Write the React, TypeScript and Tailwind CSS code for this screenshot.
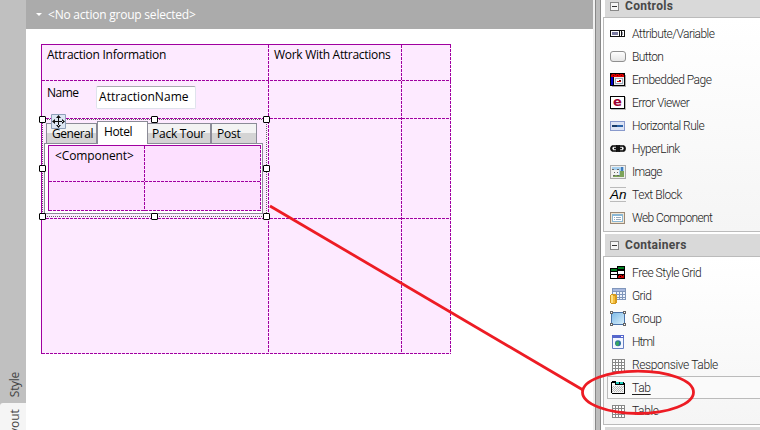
import React from "react";

const hDash = "h-px bg-[repeating-linear-gradient(90deg,#a000a0_0_3px,transparent_3px_4px)]";
const vDash = "w-px bg-[repeating-linear-gradient(180deg,#a000a0_0_3px,transparent_3px_4px)]";

const Ico = ({ children }: { children: React.ReactNode }) => (
  <svg width="16" height="16" viewBox="0 0 16 16" shapeRendering="crispEdges" className="block shrink-0">{children}</svg>
);

const AttributeIcon = () => (
  <Ico>
    <path d="M0 4h15v7H0z" fill="#111" /><path d="M1 5h8v5H1zM10 5h1v5h-1zM12 5h2v5h-2z" fill="#fff" />
    <path d="M2 6h6v3H2z" fill="#7a7aa0" /><path d="M12 6h1v3h-1z" fill="#99a" />
  </Ico>
);
const ButtonIcon = () => (
  <svg width="16" height="16" viewBox="0 0 16 16" className="block shrink-0">
    <defs><linearGradient id="btn" x1="0" y1="0" x2="0" y2="1"><stop stopColor="#fff" /><stop offset="1" stopColor="#e4e4e4" /></linearGradient></defs>
    <rect x=".5" y="2.5" width="15" height="10" rx="2.5" fill="url(#btn)" stroke="#909090" />
  </svg>
);
const EmbeddedIcon = () => (
  <Ico>
    <path d="M2 3h14v12H2z" fill="#aaa" />
    <path d="M0 1h15v13H0z" fill="#000" /><path d="M1 2h13v3H1z" fill="#d00" />
    <path d="M1 2h1v1H1zM3 3h1v1H3zM5 2h1v1H5zM7 3h1v1H7zM9 2h1v1H9zM11 3h1v1h-1zM13 2h1v1h-1z" fill="#600" />
    <path d="M1 5h2v8H1z" fill="#00c" /><path d="M4 5h10v8H4z" fill="#eee" />
    <path d="M5 6h8v6H5z" fill="#9ab" /><path d="M6 7h6v4H6z" fill="#fff" /><path d="M7 9h4v1H7z" fill="#c00" /><path d="M9 8h2v1H9z" fill="#400" />
  </Ico>
);
const ErrorIcon = () => (
  <span className="block h-[13px] w-[15px] shrink-0 border border-black bg-white text-center font-['DejaVu_Sans',sans-serif] text-[13px] font-bold leading-[9px] text-[#a00030] shadow-[1px_1px_0_#bbb]">e</span>
);
const RuleIcon = () => (
  <Ico><path d="M0 3h15v10H0z" fill="#8899cc" /><path d="M1 4h13v8H1z" fill="#dde4f4" /><path d="M2 7h11v2H2z" fill="#2a62a8" /><path d="M2 7h5v2H2z" fill="#173a66" /></Ico>
);
const LinkIcon = () => (
  <svg width="16" height="16" viewBox="0 0 16 16" className="block shrink-0" fill="none">
    <rect x="1.2" y="5" width="8" height="5" rx="2.5" stroke="#111" strokeWidth="2.2" /><rect x="6.8" y="5" width="8" height="5" rx="2.5" stroke="#111" strokeWidth="2.2" />
    <path d="M4 7.5h8" stroke="#111" strokeWidth="1.5" /><path d="M3 5h3M10 5h3M3 10h3M10 10h3" stroke="#aaa" strokeWidth=".6" />
  </svg>
);
const ImageIcon = () => (
  <Ico>
    <path d="M0 1h16v14H0z" fill="#aaa" /><path d="M1 2h14v12H1z" fill="#eee" /><path d="M2 3h12v10H2z" fill="#a5cfee" />
    <path d="M2 11h12v2H2zM10 7h4v5h-4z" fill="#7da35a" /><path d="M11 3h2v4h-2z" fill="#3e79bc" /><path d="M2 6h7v5H3v2H2z" fill="#f2f2f2" />
    <path d="M2 5h2v1H2zM7 5h2v1H7zM4 8h1v1H4zM7 8h1v1H7zM3 11h2v1H3zM7 11h2v1H7z" fill="#666" />
  </Ico>
);
const TextIcon = () => (
  <span className="block h-[15px] w-4 shrink-0 border-y border-[#bbb] font-['Liberation_Sans',sans-serif] text-[13.5px] font-medium italic leading-[13px] text-black">An</span>
);
const WebIcon = () => (
  <Ico>
    <path d="M0 2h15v12H0z" fill="#998876" /><path d="M1 3h13v10H1z" fill="#f0e6d4" /><path d="M2 4h11v8H2z" fill="#8ab7d5" />
    <path d="M3 6h9v5H3z" fill="#fff" /><path d="M4 7h1v1H4zM6 7h5v1H6zM4 9h1v1H4zM6 9h5v1H6z" fill="#9ab" />
  </Ico>
);
const FreeGridIcon = () => (
  <Ico>
    <path d="M7 1h8v13H7zM0 3h8v11H0z" fill="#000" /><path d="M8 2h6v2H8zM1 4h6v2H1z" fill="#008020" />
    <path d="M8 6h6v3H8zM1 7h6v2H1zM1 10h6v3H1z" fill="#fff" /><path d="M8 10h6v3H8z" fill="#c00" />
    <path d="M8 10h1v1H8zM10 11h1v1h-1zM12 10h1v1h-1z" fill="#000" />
  </Ico>
);
const GridIcon = () => (
  <Ico>
    <path d="M2 0h14v12H2z" fill="#8096bb" /><path d="M3 1h12v2H3z" fill="#a8b9df" />
    <path d="M3 4h3v2H3zM7 4h2v2H7zM10 4h2v2h-2zM13 4h2v2h-2zM3 7h3v2H3zM7 7h2v2H7zM10 7h2v2h-2zM13 7h2v2h-2zM7 10h2v1H7zM10 10h2v1h-2zM13 10h2v1h-2z" fill="#eef4fd" />
    <path d="M1 6h5v1h1v8H6v1H1v-1H0V7h1z" fill="#d49a20" /><path d="M1 7h2v8H1z" fill="#ffe282" /><path d="M3 8h2v7H3z" fill="#f6be3b" />
  </Ico>
);
const GroupIcon = () => (
  <Ico>
    <defs><linearGradient id="grp" x1="0" y1="0" x2="1" y2="1"><stop stopColor="#7fbbe8" /><stop offset="1" stopColor="#d8effb" /></linearGradient></defs>
    <path d="M1 1h14v13H1z" fill="#4a72a8" /><path d="M2 2h12v11H2z" fill="url(#grp)" />
    <path d="M0 0h3v3H0zM13 0h3v3h-3zM0 12h3v3H0zM13 12h3v3h-3z" fill="#666" /><path d="M1 1h1v1H1zM14 1h1v1h-1zM1 13h1v1H1zM14 13h1v1h-1z" fill="#fff" />
  </Ico>
);
const HtmlIcon = () => (
  <svg width="16" height="16" viewBox="0 0 16 16" className="block shrink-0">
    <path d="M2.5 1.5h11v13h-11z" fill="#f4f7ff" stroke="#667fc2" /><path d="M2 1h12v3H2z" fill="#5567cc" /><path d="M11 2h2v1h-2z" fill="#fff" />
    <circle cx="8" cy="9.3" r="3" fill="#2d6fa3" /><path d="M6 8q3-2 3 1t-2 3q-2-1-1-4z" fill="#37a860" />
  </svg>
);
const TableIcon = () => (
  <Ico><path d="M2 2h13v13H2z" fill="#888" /><path d="M3 3h2v2H3zM6 3h2v2H6zM9 3h2v2H9zM12 3h2v2h-2zM3 6h2v2H3zM6 6h2v2H6zM9 6h2v2H9zM12 6h2v2h-2zM3 9h2v2H3zM6 9h2v2H6zM9 9h2v2H9zM12 9h2v2h-2zM3 12h2v2H3zM6 12h2v2H6zM9 12h2v2H9zM12 12h2v2h-2z" fill="#fff" /></Ico>
);
const TabIcon = () => (
  <Ico>
    <path d="M2 1h4v1h8v1h1v11H2v-1H1V2h1z" fill="#000" /><path d="M2 3h3v2h9v8H2z" fill="#f4f4f4" />
    <path d="M6 2h3v2H6zM10 2h3v2h-3z" fill="#20c8b8" />
    <path d="M3 6h1v1H3zM5 6h1v1H5zM7 6h1v1H7zM9 6h1v1H9zM11 6h1v1h-1zM13 6h1v1h-1zM2 7h1v1H2zM4 7h1v1H4zM6 7h1v1H6zM8 7h1v1H8zM10 7h1v1h-1zM12 7h1v1h-1zM3 8h1v1H3zM5 8h1v1H5zM7 8h1v1H7zM9 8h1v1H9zM11 8h1v1h-1zM2 9h1v1H2zM4 9h1v1H4zM6 9h1v1H6zM8 9h1v1H8zM10 9h1v1h-1zM12 9h1v1h-1zM3 10h1v1H3zM5 10h1v1H5zM7 10h1v1H7zM9 10h1v1H9zM11 10h1v1h-1zM2 11h1v1H2zM4 11h1v1H4zM6 11h1v1H6zM8 11h1v1H8zM10 11h1v1h-1zM12 11h1v1h-1z" fill="#bbb" />
  </Ico>
);

type Tool = { label: string; Icon: () => React.JSX.Element; tracking: string; active?: boolean };

const controls: Tool[] = [
  { label: "Attribute/Variable", Icon: AttributeIcon, tracking: "tracking-[-0.55px]" },
  { label: "Button", Icon: ButtonIcon, tracking: "tracking-[-0.6px]" },
  { label: "Embedded Page", Icon: EmbeddedIcon, tracking: "tracking-[-0.52px]" },
  { label: "Error Viewer", Icon: ErrorIcon, tracking: "tracking-[-0.58px]" },
  { label: "Horizontal Rule", Icon: RuleIcon, tracking: "tracking-[-0.53px]" },
  { label: "HyperLink", Icon: LinkIcon, tracking: "tracking-[-0.55px]" },
  { label: "Image", Icon: ImageIcon, tracking: "tracking-[-0.7px]" },
  { label: "Text Block", Icon: TextIcon, tracking: "tracking-[-0.42px]" },
  { label: "Web Component", Icon: WebIcon, tracking: "tracking-[-0.6px]" },
];
const containers: Tool[] = [
  { label: "Free Style Grid", Icon: FreeGridIcon, tracking: "tracking-[-0.45px]" },
  { label: "Grid", Icon: GridIcon, tracking: "tracking-[-0.6px]" },
  { label: "Group", Icon: GroupIcon, tracking: "tracking-[-0.55px]" },
  { label: "Html", Icon: HtmlIcon, tracking: "tracking-[-0.9px]" },
  { label: "Responsive Table", Icon: TableIcon, tracking: "tracking-[-0.37px]" },
  { label: "Tab", Icon: TabIcon, tracking: "tracking-[-0.3px]", active: true },
  { label: "Table", Icon: TableIcon, tracking: "tracking-[-0.4px]" },
];

const SectionHeader = ({ title }: { title: string }) => (
  <div className="ml-0.5 flex h-[22px] shrink-0 items-center bg-[#d9d9d9] pl-[5px] text-[12px] font-bold tracking-[0.3px] text-[#484848]">
    <svg width="9" height="9" className="mr-[6px]" shapeRendering="crispEdges"><path d="M.5 .5h8v8h-8z" fill="#f5f5f5" stroke="#888" /><path d="M2 4h5v1H2z" fill="#333" /></svg>
    {title}
  </div>
);

const ToolRow = ({ label, Icon, tracking, active }: Tool) => (
  <div className={`flex h-[23px] items-center ${active ? "ml-[3px] border-y border-l border-[#bbb] bg-[#fafafa] pl-[2px]" : "pl-[6px]"}`}>
    <span className="flex w-[22px] shrink-0"><Icon /></span>
    <span className={`whitespace-nowrap ${tracking} ${active ? "underline underline-offset-2" : ""}`}>{label}</span>
  </div>
);

const Handle = ({ at }: { at: string }) => <span className={`absolute h-[7px] w-[7px] rounded-[1px] border border-black bg-white ${at}`} />;

export default function App() {
  return (
    <div className="relative flex h-[430px] w-[760px] overflow-hidden bg-white font-['Open_Sans','Noto_Sans',sans-serif] text-[12px] text-black">
      <aside className="flex w-[26px] shrink-0 flex-col bg-[#c0c0c0] text-[#444]">
        <div className="flex h-[403px] items-end justify-center pb-[6px] pl-1"><span className="rotate-180 tracking-[-0.3px] [writing-mode:vertical-rl]">Style</span></div>
        <div className="flex h-[27px] justify-center rounded-tl-[3px] bg-[#f5f5f5] pl-1 pt-[6px]"><span className="h-10 rotate-180 whitespace-nowrap text-right [writing-mode:vertical-rl]">Layout</span></div>
      </aside>

      <main className="w-[567px] shrink-0">
        <div className="flex h-[29px] items-center bg-[#ababab] pl-[10px] text-white">
          <svg width="6" height="3" className="mr-[6px]"><path d="M0 0h6L3 3z" fill="#fff" /></svg>
          <span className="tracking-[-0.22px]">&lt;No action group selected&gt;</span>
        </div>
        <div className="relative ml-[15px] mt-[15px] grid h-[310px] w-[410px] grid-cols-[227px_133px_50px] grid-rows-[36px_38px_100px_136px] border-l border-t border-[#a000a0] bg-[#fdeaff]">
          <div className="pl-[5px] pt-[1px] tracking-[-0.27px]">Attraction Information</div>
          <div className="pl-[5px] pt-[1px] tracking-[-0.29px]">Work With Attractions</div>
          <div />
          <div className="flex items-start pl-[5px] pt-[5px]">
            <span className="w-[49px] leading-[14px] tracking-[-0.5px]">Name</span>
            <span className="h-[23px] w-[100px] rounded-[2px] border border-[#dfe3ec] border-t-[#aaabb0] bg-white pl-[2px] leading-[20px] tracking-[0.05px]">AttractionName</span>
          </div>
          <div /><div />
          <div className="pl-[2px] pt-[2px]">
            <div className="relative z-10 -mb-px flex h-[23px] items-end pl-[2px]">
              <div className="mb-px h-[20px] w-[51px] border border-b-0 border-[#8b8b97] bg-[linear-gradient(#f3f3f3_50%,#d4d4d4_50%)] pl-[5px] leading-[19px] tracking-[-0.45px]">General</div>
              <div className="h-[23px] w-[51px] border border-b-0 border-[#8b8b97] bg-white pl-[6px] leading-[20px] tracking-[-0.4px]">Hotel</div>
              <div className="mb-px h-[20px] w-[63px] border border-b-0 border-l-0 border-[#8b8b97] bg-[linear-gradient(#f3f3f3_50%,#d4d4d4_50%)] pl-[4px] leading-[19px] tracking-[-0.25px]">Pack Tour</div>
              <div className="mb-px h-[20px] w-[46px] border border-b-0 border-[#8b8b97] bg-[linear-gradient(#f3f3f3_50%,#d4d4d4_50%)] pl-[5px] leading-[19px] tracking-[-0.2px]">Post</div>
            </div>
            <div className="h-[71px] w-[219px] border border-[#8b8b97] bg-white pl-[3px] pt-px">
              <div className="relative h-[66px] w-[213px] border-l border-t border-[#a000a0] bg-[#fde0ff] pl-[6px] pt-[1px] tracking-[-0.1px]">
                &lt;Component&gt;
                <i className={`absolute left-0 top-[35px] w-full ${hDash}`} />
                <i className={`absolute bottom-0 left-0 w-full ${hDash}`} />
                <i className={`absolute left-[95px] top-0 h-full ${vDash}`} />
                <i className={`absolute right-0 top-0 h-full ${vDash}`} />
              </div>
            </div>
          </div>
          <i className={`absolute left-0 top-[35px] w-full ${hDash}`} />
          <i className={`absolute left-0 top-[73px] w-full ${hDash}`} />
          <i className={`absolute left-0 top-[173px] w-full ${hDash}`} />
          <i className={`absolute bottom-0 left-0 w-full ${hDash}`} />
          <i className={`absolute left-[226px] top-0 h-full ${vDash}`} />
          <i className={`absolute left-[359px] top-0 h-full ${vDash}`} />
          <i className={`absolute right-0 top-0 h-full ${vDash}`} />
          <div className="absolute left-0 top-[74px] z-20 h-[98px] w-[225px]">
            <svg width="225" height="98" shapeRendering="crispEdges"><path d="M.5 .5h224v97H.5z" fill="none" stroke="#666" strokeDasharray="1 1" /></svg>
            <Handle at="-left-[3px] -top-[3px]" /><Handle at="left-[109px] -top-[3px]" /><Handle at="-right-[3px] -top-[3px]" />
            <Handle at="-left-[3px] top-[46px]" /><Handle at="-right-[3px] top-[46px]" />
            <Handle at="-left-[3px] -bottom-[3px]" /><Handle at="left-[109px] -bottom-[3px]" /><Handle at="-right-[3px] -bottom-[3px]" />
            <svg width="15" height="15" viewBox="0 0 15 15" className="absolute -top-[5px] left-[9px] rounded-[1px]">
              <path d="M0 0h15v15H0z" fill="#8e9fb9" /><path d="M1 1h13v13H1z" fill="#dce6f3" />
              <path d="M7 3h1v9H7zM3 7h9v1H3zM7.5 1l2.5 3H5zM7.5 14l2.5-3H5zM1 7.5L4 5v5zM14 7.5L11 5v5z" fill="#111" />
            </svg>
          </div>
        </div>
      </main>

      <div className="h-full w-[10px] shrink-0 bg-[linear-gradient(90deg,#f0f0f0_0_2px,#888_2px_3px,#bdbdbd_3px_7px,#888_7px_8px,#fff_8px_10px)]" />
      <aside className="flex w-[157px] shrink-0 flex-col bg-white font-['Roboto','Open_Sans',sans-serif] font-light text-[#222]">
        <div className="-mt-[5px]"><SectionHeader title="Controls" /></div>
        <div className="h-[215px] shrink-0 border-y border-l border-[#bbb] bg-gradient-to-b from-white to-[#f5f5f5] pt-[4px]">
          {controls.map((t) => <ToolRow key={t.label} {...t} />)}
        </div>
        <div className="pt-[2px]"><SectionHeader title="Containers" /></div>
        <div className="h-[169px] shrink-0 border-y border-l border-[#bbb] bg-gradient-to-b from-white to-[#f5f5f5] pt-[4px]">
          {containers.map((t) => <ToolRow key={t.label} {...t} />)}
        </div>
        <div className="ml-0.5 mt-[2px] h-1 bg-[#d9d9d9]" />
      </aside>

      <svg width="760" height="430" className="pointer-events-none absolute left-0 top-0 z-30" fill="none" stroke="#ed1c24" strokeWidth="2.8">
        <path d="M270 206L583 390" /><ellipse cx="638" cy="392.3" rx="55.5" ry="21.2" />
      </svg>
    </div>
  );
}
